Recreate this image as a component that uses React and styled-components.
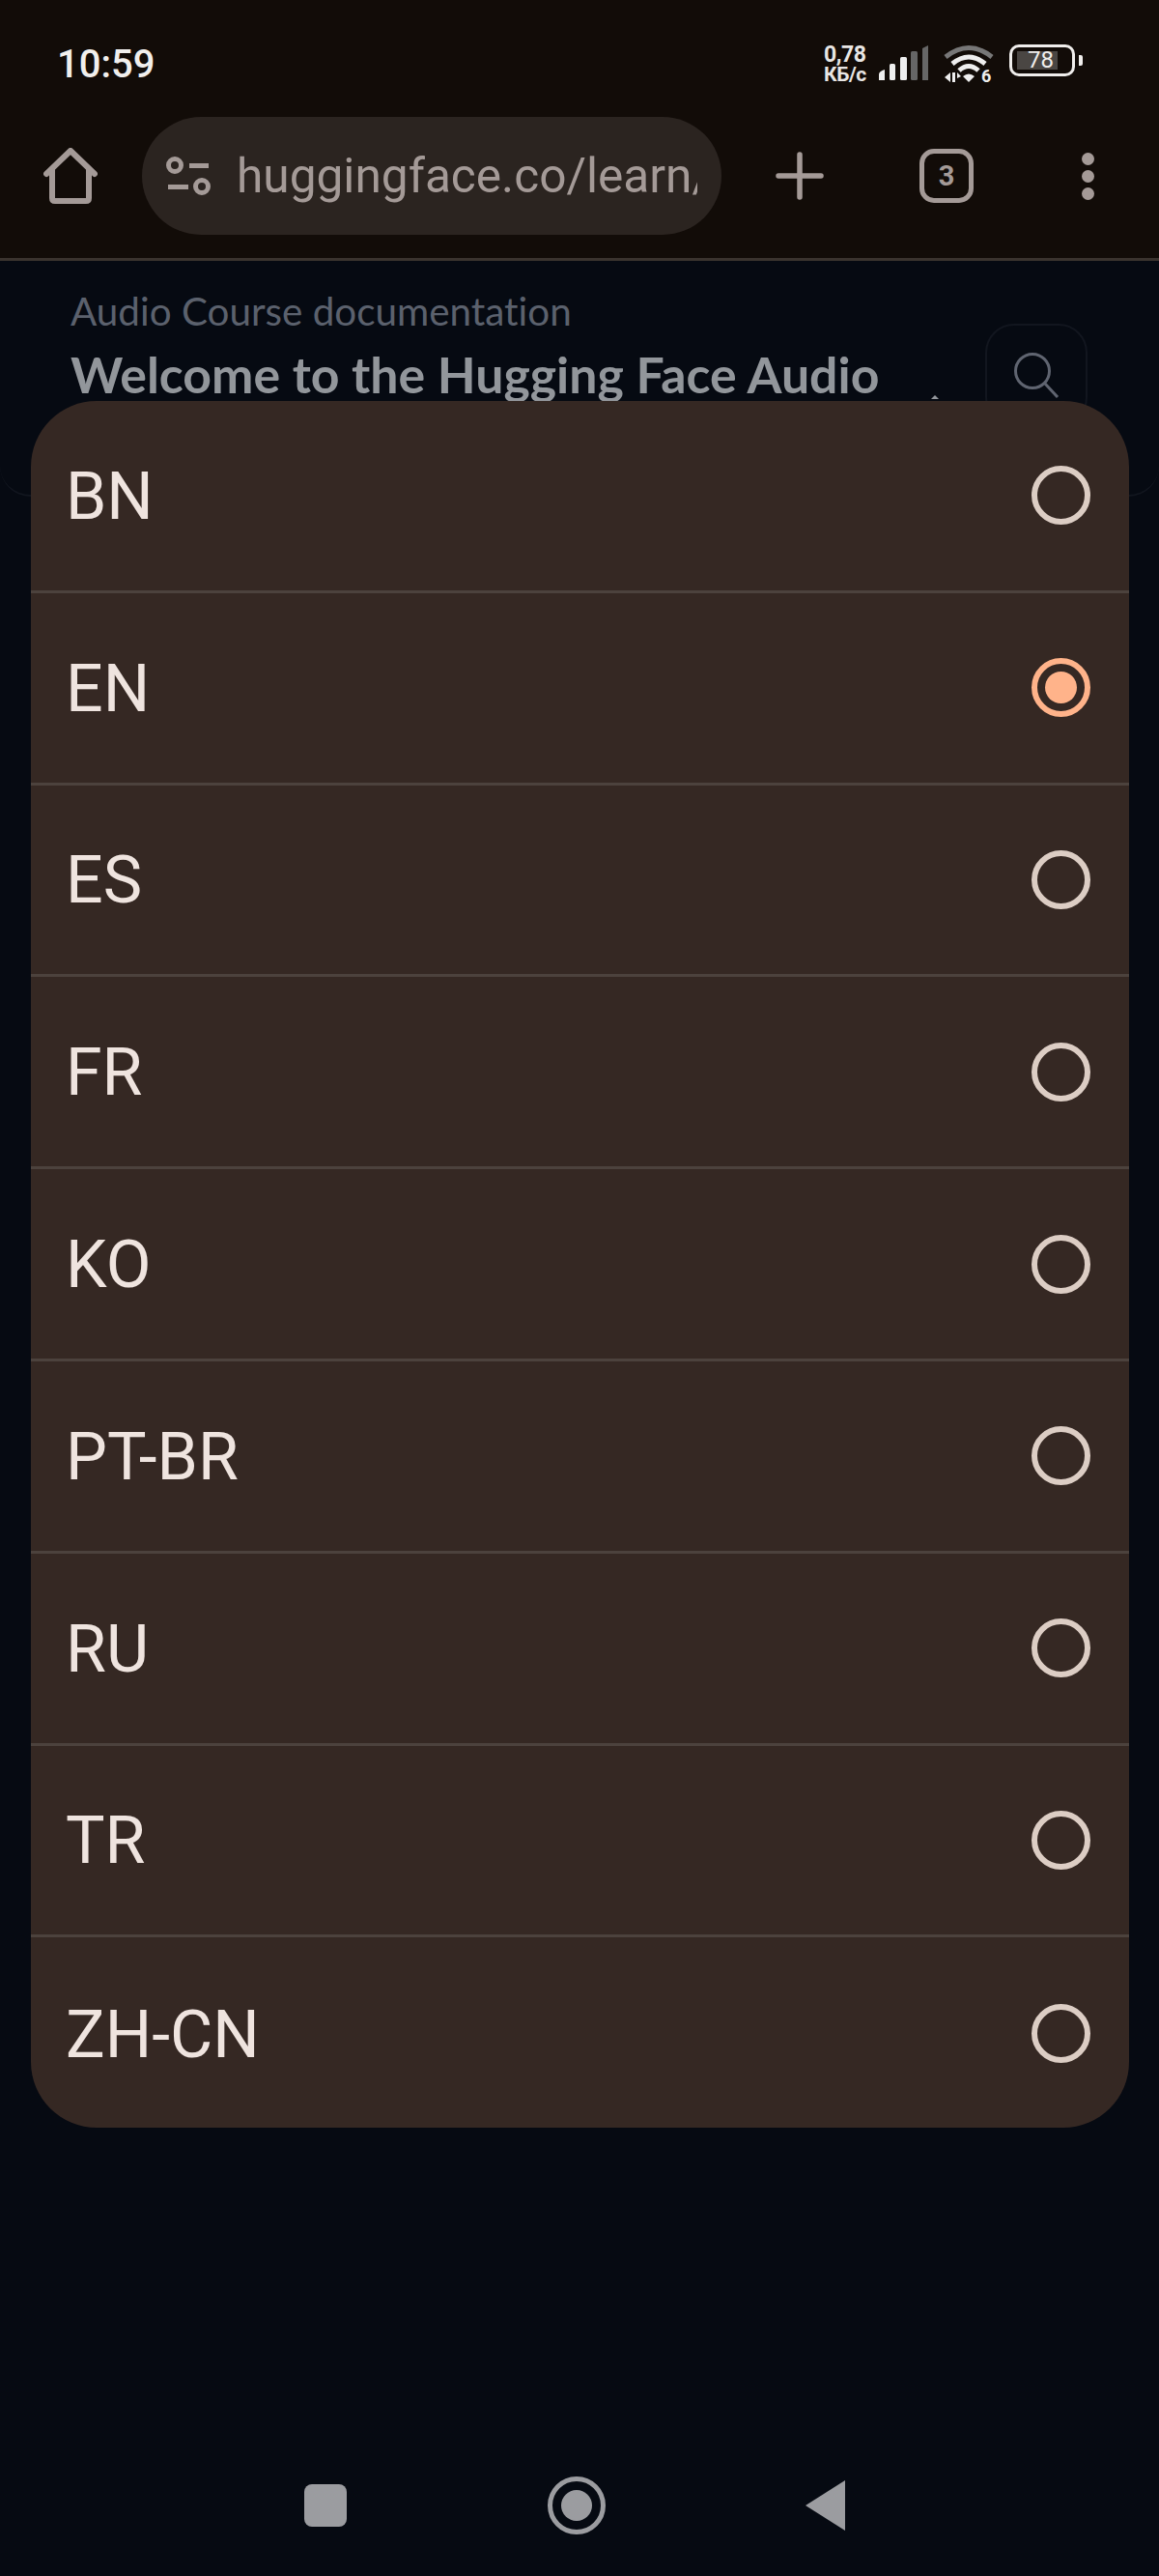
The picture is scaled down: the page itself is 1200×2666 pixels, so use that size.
import React from "react";
import styled, { createGlobalStyle } from "styled-components";

const LANGUAGES = ["BN", "EN", "ES", "FR", "KO", "PT-BR", "RU", "TR", "ZH-CN"];

export default function App() {
  return (
    <>
      <GlobalStyle />
      <Screen>
        <BrowserChrome>
          <StatusBar>
            <Clock>10:59</Clock>
            <StatusIcons>
              <NetSpeed>
                <span>0,78</span>
                <span>КБ/с</span>
              </NetSpeed>
              <SignalIcon />
              <WifiIcon />
              <Battery>
                <BatteryBody>
                  <BatteryFill />
                  <BatteryLevel>78</BatteryLevel>
                </BatteryBody>
                <BatteryNub />
              </Battery>
            </StatusIcons>
          </StatusBar>
          <Toolbar>
            <HomeIcon />
            <UrlPill>
              <TuneIcon />
              <UrlText>huggingface.co/learn/</UrlText>
            </UrlPill>
            <PlusIcon />
            <TabCount>3</TabCount>
            <MenuDots>
              <i />
              <i />
              <i />
            </MenuDots>
          </Toolbar>
        </BrowserChrome>

        <PageHeader>
          <HeaderText>
            <CourseName>Audio Course documentation</CourseName>
            <PageTitle>Welcome to the Hugging Face Audio</PageTitle>
          </HeaderText>
          <SearchButton>
            <SearchIcon />
          </SearchButton>
          <ChevronTip />
        </PageHeader>

        <NavBar>
          <NavSquare />
          <NavCircle />
          <NavBack />
        </NavBar>

        <Sheet>
          {LANGUAGES.map((lang) => (
            <Row key={lang}>
              <RowLabel>{lang}</RowLabel>
              <Radio $checked={lang === "EN"} />
            </Row>
          ))}
        </Sheet>
      </Screen>
    </>
  );
}

const HomeIcon = () => (
  <HomeSvg viewBox="0 0 56 58" fill="none">
    <path
      d="M3 27 L28 3 L53 27 M9 23 V52 Q9 55 12 55 H44 Q47 55 47 52 V23"
      stroke="#a49a97"
      strokeWidth="6"
      strokeLinecap="round"
      strokeLinejoin="round"
    />
  </HomeSvg>
);

const TuneIcon = () => (
  <TuneSvg viewBox="0 0 48 40" fill="none" stroke="#a49a97" strokeWidth="5">
    <circle cx="9" cy="9" r="6.5" />
    <path d="M24 9.5 H44 M2 31.5 H23" />
    <circle cx="37" cy="31" r="6.5" />
  </TuneSvg>
);

const PlusIcon = () => (
  <PlusSvg viewBox="0 0 50 50" fill="none">
    <path
      d="M25 3 V47 M3 25 H47"
      stroke="#a49a97"
      strokeWidth="5.5"
      strokeLinecap="round"
    />
  </PlusSvg>
);

const SearchIcon = () => (
  <SearchSvg viewBox="0 0 48 48" fill="none">
    <circle cx="20" cy="20" r="17.5" stroke="#5f6470" strokeWidth="3" />
    <path d="M33 33 L46 47" stroke="#5f6470" strokeWidth="3" />
  </SearchSvg>
);

const SignalIcon = () => (
  <SignalSvg viewBox="0 0 52 36">
    <path d="M0 36 V30 Q0 27 6 25 V36 Z" fill="#eee" />
    <rect x="11" y="19" width="6" height="17" rx="1.5" fill="#eee" />
    <rect x="22" y="12" width="7" height="24" rx="1.5" fill="#eee" />
    <rect x="33" y="6" width="7" height="30" rx="1.5" fill="#666" />
    <path d="M45 3 L51 0 V36 H45 Z" fill="#666" />
  </SignalSvg>
);

const WifiIcon = () => (
  <WifiSvg viewBox="0 0 52 40" fill="none">
    <path d="M2 13 Q26 -6 50 13" stroke="#777" strokeWidth="5" />
    <path d="M9 20 Q26 6 43 20" stroke="#eee" strokeWidth="5" />
    <path d="M16 27 Q26 18 36 27" stroke="#eee" strokeWidth="5" />
    <path d="M20 33 Q26 28 32 33 L26 39 Z" fill="#eee" />
    <path d="M1 34 L7 29 V39 Z M9 29 H12 V39 H9 Z M14 29 L18 33 L14 35 Z" fill="#eee" />
    <SixLabel x="39" y="39">6</SixLabel>
  </WifiSvg>
);

const GlobalStyle = createGlobalStyle`
  html, body {
    margin: 0;
    padding: 0;
    background: #060a12;
  }
  * {
    box-sizing: border-box;
  }
`;

const Screen = styled.div`
  position: relative;
  width: 1200px;
  height: 2666px;
  overflow: hidden;
  background: #060a12;
  display: flex;
  flex-direction: column;
  font-family: Roboto, "Liberation Sans", sans-serif;
`;

const BrowserChrome = styled.header`
  height: 270px;
  background: #120c08;
  border-bottom: 3px solid #3a332e;
  flex-shrink: 0;
`;

const StatusBar = styled.div`
  height: 121px;
  padding: 44px 79px 0 59px;
  display: flex;
  justify-content: space-between;
  align-items: flex-start;
`;

const Clock = styled.div`
  font-size: 40px;
  line-height: 46px;
  font-weight: 500;
  color: #f1efed;
`;

const StatusIcons = styled.div`
  display: flex;
  align-items: flex-start;
  margin-top: 2px;
`;

const NetSpeed = styled.div`
  width: 46px;
  display: flex;
  flex-direction: column;
  font-size: 23px;
  line-height: 21px;
  font-weight: 700;
  letter-spacing: -0.4px;
  white-space: nowrap;
  color: #e8e6e4;
  span:last-child {
    font-size: 21px;
  }
`;

const SignalSvg = styled.svg`
  width: 52px;
  height: 36px;
  margin: 1px 0 0 11px;
`;

const WifiSvg = styled.svg`
  width: 52px;
  height: 40px;
  margin: 0 0 0 15px;
`;

const SixLabel = styled.text`
  font-family: Roboto, sans-serif;
  font-size: 18px;
  font-weight: 700;
  fill: #eee;
  stroke: none;
`;

const Battery = styled.div`
  display: flex;
  align-items: center;
  margin: 0 0 0 16px;
  height: 33px;
`;

const BatteryBody = styled.div`
  position: relative;
  width: 68px;
  height: 33px;
  border: 3px solid #f0eeec;
  border-radius: 10px;
`;

const BatteryFill = styled.div`
  position: absolute;
  left: 5px;
  top: 4px;
  width: 42px;
  height: 19px;
  background: #4a4643;
`;

const BatteryLevel = styled.span`
  position: absolute;
  left: 16px;
  top: 0;
  font-size: 24px;
  line-height: 27px;
  color: #f0eeec;
`;

const BatteryNub = styled.div`
  width: 4px;
  height: 11px;
  margin-left: 4px;
  border-radius: 0 2px 2px 0;
  background: #f0eeec;
`;

const Toolbar = styled.div`
  height: 122px;
  display: flex;
  align-items: center;
  position: relative;
`;

const HomeSvg = styled.svg`
  width: 56px;
  height: 58px;
  margin-left: 45px;
  flex-shrink: 0;
`;

const UrlPill = styled.div`
  width: 600px;
  height: 122px;
  margin-left: 46px;
  padding: 0 25px;
  border-radius: 61px;
  background: #2b2420;
  display: flex;
  align-items: center;
  flex-shrink: 0;
`;

const TuneSvg = styled.svg`
  width: 48px;
  height: 40px;
  flex-shrink: 0;
`;

const UrlText = styled.div`
  margin-left: 25px;
  width: 477px;
  overflow: hidden;
  white-space: nowrap;
  font-size: 49.6px;
  line-height: 60px;
  color: #a49a97;
`;

const PlusSvg = styled.svg`
  width: 50px;
  height: 50px;
  margin-left: 56px;
  flex-shrink: 0;
`;

const TabCount = styled.div`
  width: 56px;
  height: 56px;
  margin-left: 99px;
  border: 5px solid #a49a97;
  border-radius: 15px;
  display: flex;
  align-items: center;
  justify-content: center;
  font-size: 29px;
  font-weight: 700;
  color: #a49a97;
  flex-shrink: 0;
`;

const MenuDots = styled.div`
  display: flex;
  flex-direction: column;
  gap: 5px;
  margin-left: 112px;
  i {
    width: 13px;
    height: 13px;
    border-radius: 50%;
    background: #a49a97;
  }
`;

const PageHeader = styled.section`
  position: relative;
  height: 244px;
  padding: 29px 74px 0 73px;
  border-bottom: 2px solid #12161f;
  border-radius: 0 0 32px 32px;
  display: flex;
  justify-content: space-between;
  flex-shrink: 0;
`;

const HeaderText = styled.div`
  display: flex;
  flex-direction: column;
`;

const CourseName = styled.div`
  font-family: Lato, "Noto Sans", sans-serif;
  font-size: 40.4px;
  line-height: 46px;
  font-variant-ligatures: none;
  color: #5b616d;
`;

const PageTitle = styled.h1`
  margin: 12px 0 0;
  font-family: Lato, "Noto Sans", sans-serif;
  font-size: 51.8px;
  line-height: 60px;
  font-weight: 700;
  color: #92969b;
  white-space: nowrap;
`;

const SearchButton = styled.div`
  width: 106px;
  height: 106px;
  margin-top: 36px;
  border: 2px solid #12161f;
  border-radius: 30px;
  display: flex;
  align-items: center;
  justify-content: center;
`;

const SearchSvg = styled.svg`
  width: 48px;
  height: 48px;
`;

const ChevronTip = styled.span`
  position: absolute;
  left: 964px;
  top: 139px;
  width: 8px;
  height: 4px;
  background: #92969b;
  clip-path: polygon(50% 0, 100% 100%, 0 100%);
`;

const NavBar = styled.nav`
  margin-top: auto;
  height: 146px;
  padding: 0 325px 0 315px;
  display: flex;
  justify-content: space-between;
  align-items: center;
`;

const NavSquare = styled.div`
  width: 44px;
  height: 44px;
  border-radius: 8px;
  background: #9b9ca0;
`;

const NavCircle = styled.div`
  width: 60px;
  height: 60px;
  border: 5px solid #9b9ca0;
  border-radius: 50%;
  padding: 9px;
  &::after {
    content: "";
    display: block;
    width: 32px;
    height: 32px;
    border-radius: 50%;
    background: #9b9ca0;
  }
`;

const NavBack = styled.div`
  width: 41px;
  height: 52px;
  background: #9b9ca0;
  clip-path: polygon(100% 0, 100% 100%, 0 50%);
`;

const Sheet = styled.div`
  position: absolute;
  left: 32px;
  top: 415px;
  width: 1137px;
  height: 1787px;
  border-radius: 68px;
  background: #352823;
  overflow: hidden;
`;

const Row = styled.div`
  height: 198.8px;
  padding: 0 40px 0 36px;
  display: flex;
  align-items: center;
  justify-content: space-between;
  border-bottom: 3px solid #4c423d;
  &:last-child {
    border-bottom: 0;
  }
`;

const RowLabel = styled.span`
  padding-top: 2px;
  font-size: 68px;
  color: #efe4df;
`;

const Radio = styled.span`
  position: relative;
  width: 61px;
  height: 61px;
  border-radius: 50%;
  border: 6px solid ${({ $checked }) => ($checked ? "#ffb38a" : "#dccdc4")};
  &::after {
    content: "";
    display: ${({ $checked }) => ($checked ? "block" : "none")};
    position: absolute;
    inset: 8px;
    border-radius: 50%;
    background: #ffb38a;
  }
`;
